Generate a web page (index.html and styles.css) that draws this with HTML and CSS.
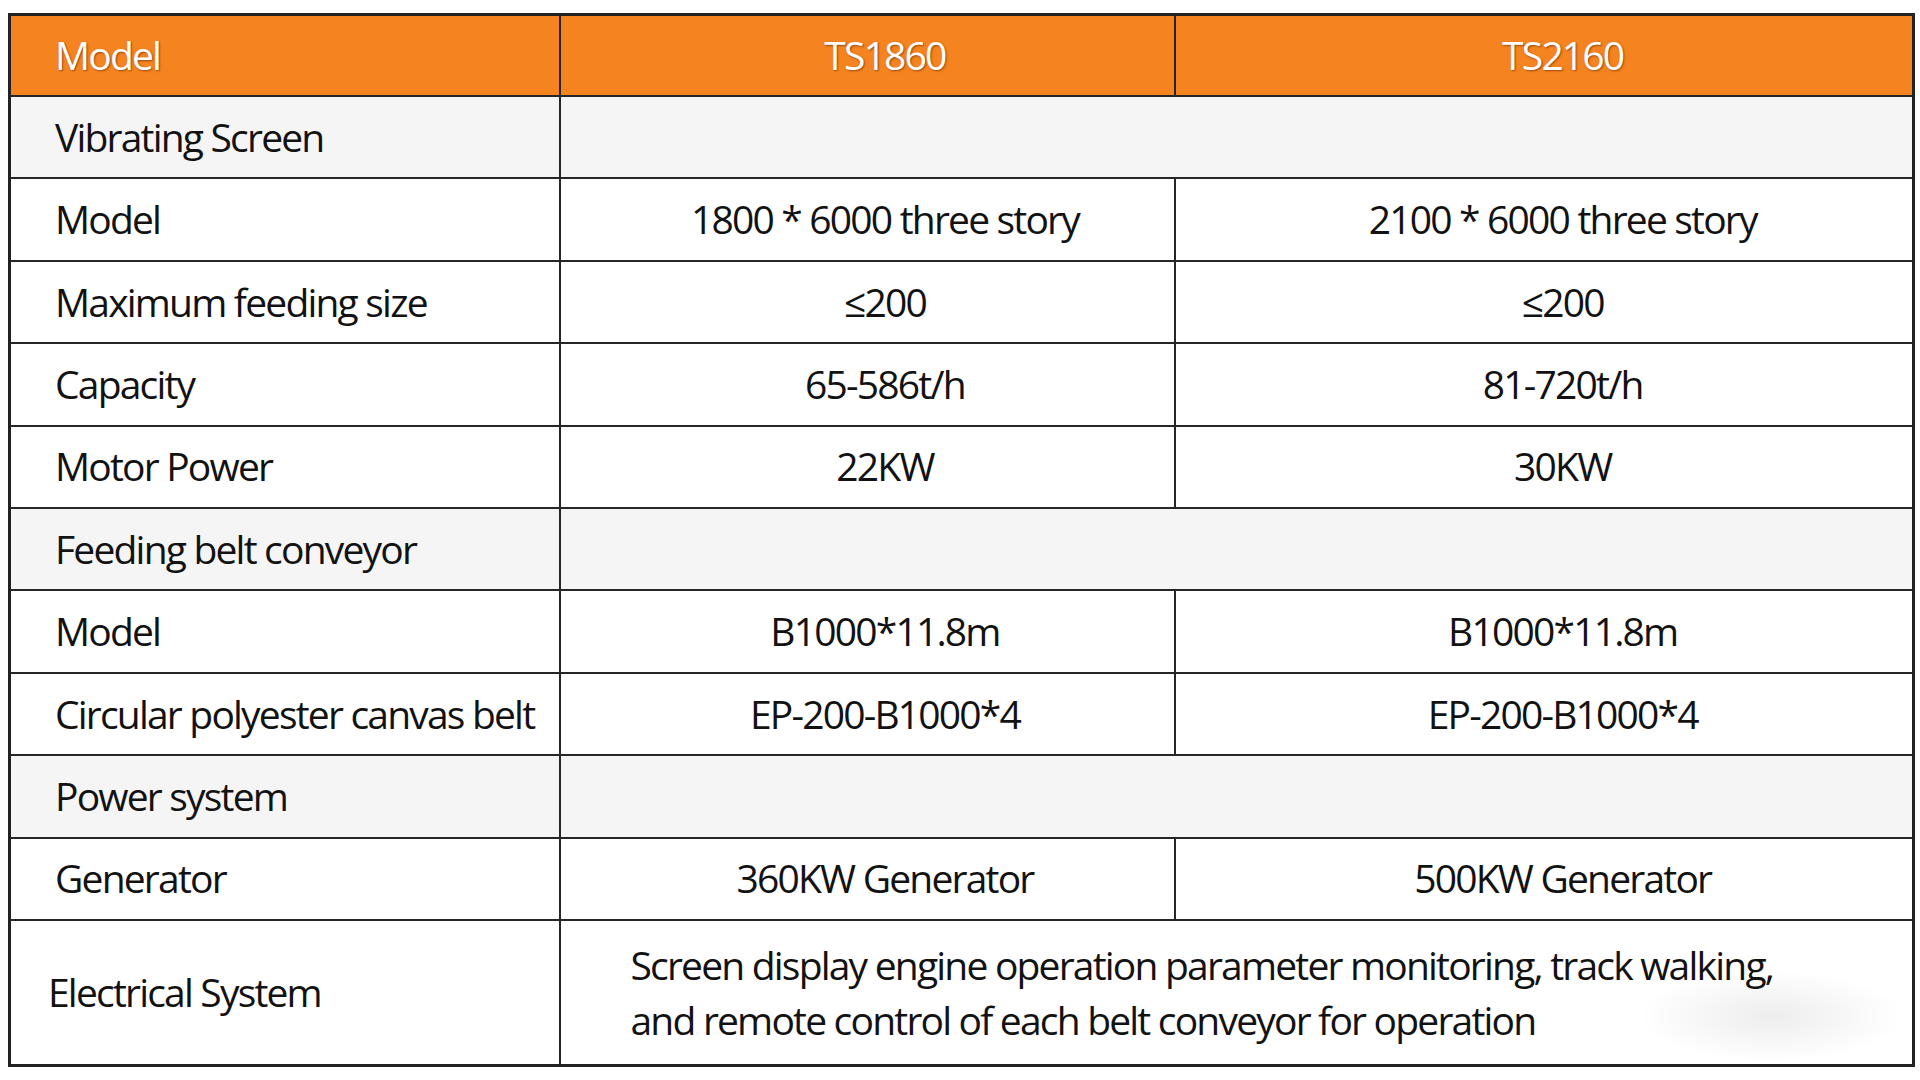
FILE: index.html
```html
<!DOCTYPE html>
<html lang="en">
<head>
<meta charset="utf-8">
<title>TS1860 / TS2160 Specifications</title>
<link rel="stylesheet" href="styles.css">
</head>
<body>
<table class="spec">
  <colgroup>
    <col class="c1">
    <col class="c2">
    <col class="c3">
  </colgroup>
  <thead>
    <tr class="head">
      <th class="label">Model</th>
      <th class="val">TS1860</th>
      <th class="val v3">TS2160</th>
    </tr>
  </thead>
  <tbody>
    <tr class="section"><td class="label">Vibrating Screen</td><td colspan="2"></td></tr>
    <tr><td class="label">Model</td><td class="val">1800 * 6000 three story</td><td class="val v3">2100 * 6000 three story</td></tr>
    <tr><td class="label">Maximum feeding size</td><td class="val">≤200</td><td class="val v3">≤200</td></tr>
    <tr><td class="label">Capacity</td><td class="val">65-586t/h</td><td class="val v3">81-720t/h</td></tr>
    <tr><td class="label">Motor Power</td><td class="val">22KW</td><td class="val v3">30KW</td></tr>
    <tr class="section"><td class="label">Feeding belt conveyor</td><td colspan="2"></td></tr>
    <tr><td class="label">Model</td><td class="val">B1000*11.8m</td><td class="val v3">B1000*11.8m</td></tr>
    <tr><td class="label">Circular polyester canvas belt</td><td class="val">EP-200-B1000*4</td><td class="val v3">EP-200-B1000*4</td></tr>
    <tr class="section"><td class="label">Power system</td><td colspan="2"></td></tr>
    <tr><td class="label">Generator</td><td class="val">360KW Generator</td><td class="val v3">500KW Generator</td></tr>
    <tr class="tall"><td class="label elec">Electrical System</td><td colspan="2" class="desc">Screen display engine operation parameter monitoring, track walking,<br>and remote control of each belt conveyor for operation</td></tr>
  </tbody>
</table>
</body>
</html>
```
FILE: styles.css
```css
html, body {
  margin: 0;
  padding: 0;
  background: #ffffff;
}

body {
  padding: 13px 8px 0 8px;
  font-family: "Open Sans", "Noto Sans", sans-serif;
  color: #121212;
}

.spec {
  width: 1904px;
  border-collapse: collapse;
  table-layout: fixed;
  border: 3px solid #222222;
  font-size: 39px;
  line-height: 1.2;
  letter-spacing: -1.8px;
  white-space: nowrap;
}

.c1 { width: 550px; }
.c2 { width: 615px; }
.c3 { width: 739px; }

.spec th,
.spec td {
  border: 2px solid #262626;
  padding: 0;
  height: 80.4px;
  font-weight: 400;
  vertical-align: middle;
}

.head th {
  background: #f5831f;
  color: #ffffff;
  text-shadow: 1px 1px 2px rgba(80, 30, 0, 0.55);
  height: 79px;
}

.label {
  text-align: left;
  padding-left: 44px !important;
}

.val {
  text-align: center;
  padding-left: 36px !important;
}

.val.v3 {
  padding-left: 38px !important;
}

.section td {
  background: #f5f5f5;
}

.tall td {
  height: 143px;
}

.elec {
  padding-left: 37px !important;
}

.desc {
  text-align: left;
  padding-left: 70px !important;
  line-height: 55px;
  background:
    radial-gradient(ellipse 130px 45px at 1210px 95px, rgba(0, 0, 0, 0.07), rgba(0, 0, 0, 0) 100%),
    #ffffff;
}
```
